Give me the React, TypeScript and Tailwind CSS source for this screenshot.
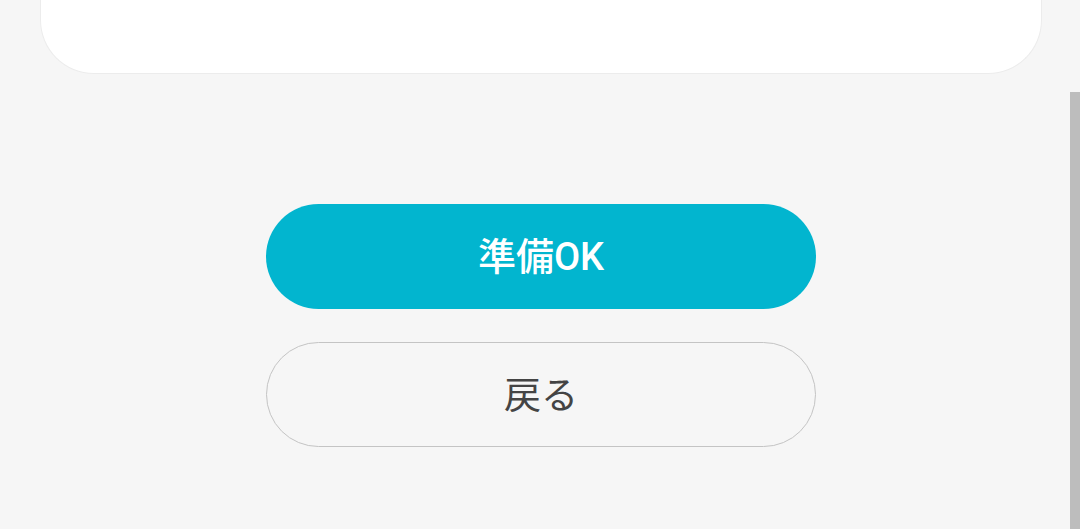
export default function App() {
  return (
    <div
      className="relative h-[529px] w-[1080px] overflow-hidden bg-[#f6f6f6]"
      style={{ fontFamily: 'Roboto, "Noto Sans CJK JP", "Noto Sans", sans-serif' }}
    >
      <div className="ml-[40px] mr-[38px] h-[74px] rounded-b-[54px] border-x border-b border-[#ececec] bg-white" />

      <div className="mx-auto mt-[130px] flex w-[552px] flex-col gap-[33px] pl-[2px]">
        <button className="flex h-[105px] items-center justify-center rounded-full bg-[#02b5cf] pt-[2px] text-[38px] font-medium text-white">
          準備OK
        </button>
        <button className="flex h-[105px] items-center justify-center rounded-full border border-[#c4c4c4] pt-[4px] text-[37px] text-[#444]">
          戻る
        </button>
      </div>

      <div className="absolute right-0 top-[92px] bottom-0 w-[10px] bg-[#bdbdbd]" />
    </div>
  )
}
